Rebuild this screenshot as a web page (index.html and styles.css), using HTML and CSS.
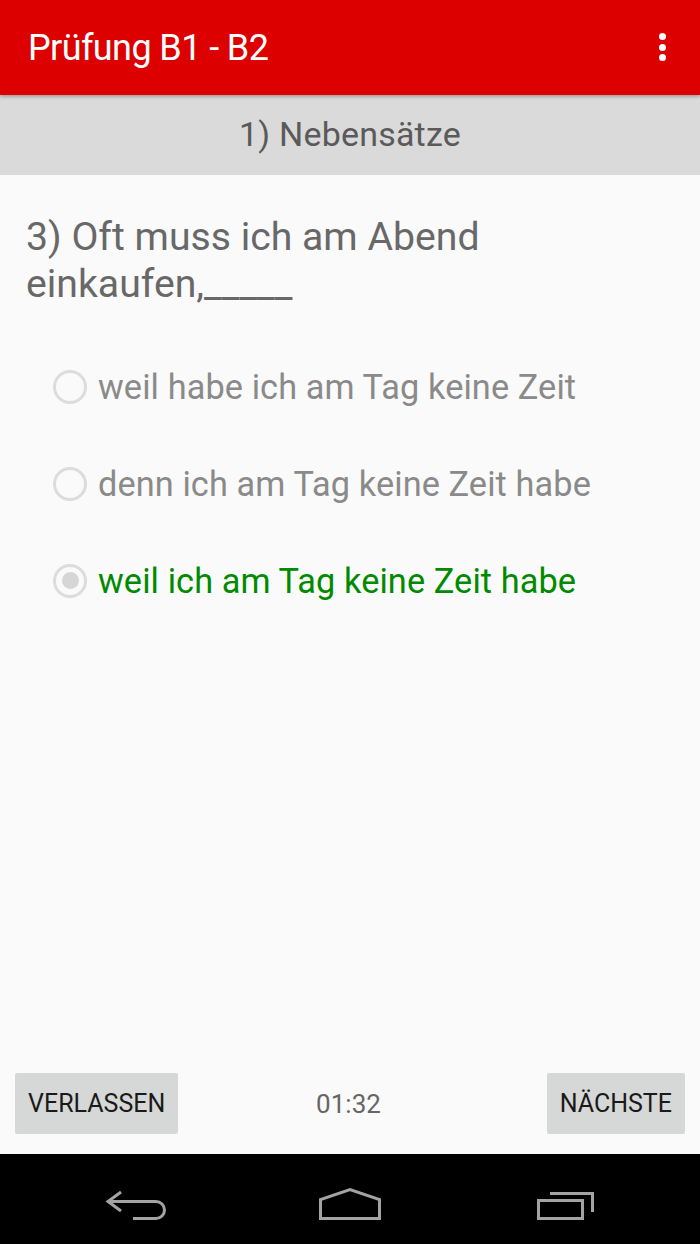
FILE: index.html
```html
<!DOCTYPE html>
<html lang="de">
<head>
<meta charset="utf-8">
<title>Prüfung B1 - B2</title>
<link rel="stylesheet" href="styles.css">
</head>
<body>
<div class="screen">
  <header class="appbar">
    <h1 class="appbar-title">Prüfung B1 - B2</h1>
    <div class="overflow" aria-label="Menü">
      <span class="dot"></span><span class="dot"></span><span class="dot"></span>
    </div>
  </header>
  <div class="section-bar">1) Nebensätze</div>
  <main class="content">
    <p class="question">3) Oft muss ich am Abend einkaufen,_____</p>
    <ul class="options">
      <li class="option"><span class="radio"></span><span class="option-text">weil habe ich am Tag keine Zeit</span></li>
      <li class="option"><span class="radio"></span><span class="option-text">denn ich am Tag keine Zeit habe</span></li>
      <li class="option option-correct"><span class="radio radio-checked"></span><span class="option-text">weil ich am Tag keine Zeit habe</span></li>
    </ul>
  </main>
  <footer class="footer">
    <button class="btn">VERLASSEN</button>
    <span class="timer">01:32</span>
    <button class="btn">NÄCHSTE</button>
  </footer>
  <nav class="navbar">
    <svg class="nav-icon" width="80" height="40" viewBox="0 0 80 40" fill="none" stroke="#a3a3a3" stroke-width="3">
      <path d="M26 7 L13 16.5 L26 26"/>
      <path d="M13 16.5 H61 A8.5 8.5 0 0 1 61 33.5 H38"/>
    </svg>
    <svg class="nav-icon" width="80" height="40" viewBox="0 0 80 40" fill="none" stroke="#a3a3a3" stroke-width="3">
      <path d="M10.5 33.5 V14.5 L40 4.5 L69.5 14.5 V33.5 Z"/>
    </svg>
    <svg class="nav-icon" width="80" height="40" viewBox="0 0 80 40" fill="none" stroke="#a3a3a3" stroke-width="3">
      <rect x="13.5" y="15.5" width="44" height="18"/>
      <path d="M25 8.5 H67.5 V27"/>
    </svg>
  </nav>
</div>
</body>
</html>
```

FILE: styles.css
```css
* {
  box-sizing: border-box;
}

html, body {
  margin: 0;
  padding: 0;
}

body {
  font-family: Roboto, "Liberation Sans", sans-serif;
  background: #fafafa;
}

.screen {
  width: 700px;
  height: 1244px;
  display: flex;
  flex-direction: column;
  background: #fafafa;
  overflow: hidden;
}

.appbar {
  height: 95px;
  flex: none;
  background: #dd0000;
  display: flex;
  align-items: center;
  justify-content: space-between;
  padding: 0 34px 0 28px;
  position: relative;
  z-index: 1;
  box-shadow: 0 2px 3px rgba(0, 0, 0, 0.25);
}

.appbar-title {
  margin: 0;
  color: #ffffff;
  font-weight: 400;
  font-size: 36px;
  letter-spacing: -0.6px;
  margin-top: 0;
}

.overflow {
  display: flex;
  flex-direction: column;
  gap: 3.5px;
  margin-top: -1px;
}

.dot {
  width: 7px;
  height: 7px;
  border-radius: 50%;
  background: #ffffff;
}

.section-bar {
  height: 80px;
  flex: none;
  background: #dadada;
  color: #5a5a5a;
  font-size: 34px;
  letter-spacing: 0.2px;
  display: flex;
  align-items: center;
  justify-content: center;
  padding-bottom: 2px;
}

.content {
  flex: 1;
  padding: 39px 26px 0 26px;
}

.question {
  margin: 0;
  color: #686868;
  font-size: 39.2px;
  line-height: 47px;
  max-width: 510px;
}

.options {
  list-style: none;
  margin: 30px 0 0 0;
  padding: 0 0 0 27px;
}

.option {
  height: 97px;
  display: flex;
  align-items: center;
  gap: 11px;
}

.radio {
  width: 34px;
  height: 34px;
  border-radius: 50%;
  border: 3px solid #dcdcdc;
  flex: none;
  display: flex;
  align-items: center;
  justify-content: center;
}

.radio-checked::after {
  content: "";
  width: 17px;
  height: 17px;
  border-radius: 50%;
  background: #d6d6d6;
}

.option-text {
  font-size: 34.3px;
  color: #8a8a8a;
  letter-spacing: 0.1px;
}

.option-correct .option-text {
  color: #008a00;
}

.footer {
  height: 97px;
  flex: none;
  display: flex;
  align-items: center;
  justify-content: space-between;
  padding: 0 15px 4px 15px;
}

.btn {
  font-family: Roboto, "Liberation Sans", sans-serif;
  height: 61px;
  border: none;
  border-radius: 2px;
  background: #d6d7d7;
  color: #1a1a1a;
  font-size: 25px;
  letter-spacing: 0;
  padding: 0 13px;
}

.timer {
  font-size: 26px;
  color: #666666;
  margin-right: 28px;
}

.navbar {
  height: 90px;
  flex: none;
  background: #000000;
  display: flex;
  justify-content: center;
  align-items: flex-start;
  gap: 135px;
  padding-top: 31px;
}

.nav-icon {
  display: block;
}
```
